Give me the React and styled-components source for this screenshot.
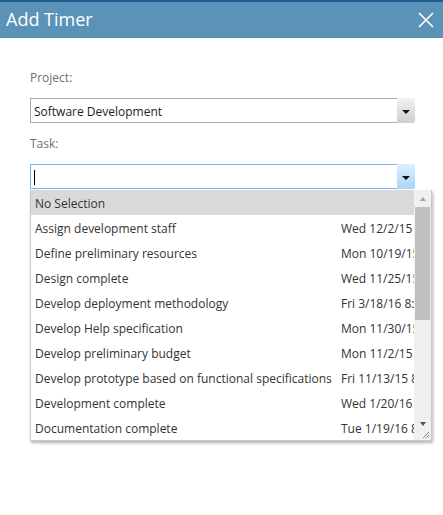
import React from 'react';
import styled, { createGlobalStyle } from 'styled-components';

const GlobalStyle = createGlobalStyle`
  html, body {
    margin: 0;
    padding: 0;
    background: #ffffff;
    font-family: "Open Sans", "Liberation Sans", sans-serif;
  }
`;

const tasks = [
  ['Assign development staff', 'Wed 12/2/15 8:00 AM'],
  ['Define preliminary resources', 'Mon 10/19/15 8:00 AM'],
  ['Design complete', 'Wed 11/25/15 5:00 PM'],
  ['Develop deployment methodology', 'Fri 3/18/16 8:00 AM'],
  ['Develop Help specification', 'Mon 11/30/15 8:00 AM'],
  ['Develop preliminary budget', 'Mon 11/2/15 8:00 AM'],
  ['Develop prototype based on functional specifications', 'Fri 11/13/15 8:00 AM'],
  ['Development complete', 'Wed 1/20/16 5:00 PM'],
  ['Documentation complete', 'Tue 1/19/16 8:00 AM']
];

const Dialog = styled.div`
  width: 443px;
  height: 515px;
  background: #fff;
  position: relative;
  overflow: hidden;
`;

const Header = styled.div`
  height: 36px;
  border-top: 2px solid #1d5b93;
  background: #5a92b8;
  display: flex;
  align-items: center;
  justify-content: space-between;
  padding: 0 8px 0 6px;
`;

const Title = styled.h1`
  margin: 0;
  color: #fff;
  font-size: 18px;
  font-weight: 400;
  line-height: 1;
  padding-bottom: 2px;
`;

const Close = styled.button`
  border: 0;
  background: none;
  padding: 0;
  width: 18px;
  height: 18px;
  display: flex;
  cursor: pointer;
`;

const Body = styled.div`
  padding: 31px 28px 0 30px;
  position: relative;
`;

const Label = styled.div`
  color: #707070;
  font-size: 12px;
  line-height: 17px;
  margin-bottom: ${(p) => p.gap}px;
`;

const Field = styled.div`
  position: relative;
  height: 25px;
  display: flex;
  margin-bottom: ${(p) => p.gap || 0}px;
`;

const Input = styled.div`
  flex: 1;
  box-sizing: border-box;
  height: 25px;
  border: 1px solid ${(p) => (p.focused ? '#7eb4ea' : '#a9a9a9')};
  border-right: 0;
  font-size: 12px;
  color: #222;
  display: flex;
  align-items: center;
  padding: 1px 0 0 3px;
`;

const Caret = styled.span`
  width: 1px;
  height: 15px;
  background: #000;
`;

const Arrow = styled.div`
  width: 18px;
  height: 25px;
  border-radius: 0 2px 2px 0;
  background: ${(p) =>
    p.focused
      ? 'linear-gradient(#dcefff, #a9d6fb)'
      : 'linear-gradient(#f2f2f2, #cfcfcf)'};
  display: flex;
  align-items: center;
  justify-content: center;
  &::after {
    content: '';
    border-left: 4px solid transparent;
    border-right: 4px solid transparent;
    border-top: 4px solid #111;
    margin-top: 2px;
  }
`;

const Popup = styled.div`
  position: absolute;
  top: 26px;
  left: 0;
  width: 402px;
  height: 251px;
  box-sizing: border-box;
  border: 1px solid #c8c8c8;
  border-top: 0;
  background: #fff;
  box-shadow: 1px 2px 3px rgba(0, 0, 0, 0.3);
  display: flex;
  z-index: 2;
`;

const List = styled.div`
  flex: 1;
  overflow: hidden;
`;

const Row = styled.div`
  height: 25px;
  box-sizing: border-box;
  display: flex;
  align-items: center;
  white-space: nowrap;
  font-size: 12px;
  color: #333;
  background: ${(p) => (p.selected ? '#d9d9d9' : '#fff')};
  padding: 1px 0 0 4px;
`;

const Name = styled.span`
  width: 306px;
  flex-shrink: 0;
`;

const DateText = styled.span`
  flex-shrink: 0;
`;

const Scrollbar = styled.div`
  width: 17px;
  background: #f0f0f0;
  display: flex;
  flex-direction: column;
  align-items: center;
  position: relative;
`;

const ScrollArrow = styled.div`
  height: 17px;
  width: 17px;
  display: flex;
  align-items: center;
  justify-content: center;
  &::after {
    content: '';
    border-left: 3.5px solid transparent;
    border-right: 3.5px solid transparent;
    ${(p) => (p.up ? 'border-bottom: 4px solid #a3a3a3;' : 'border-top: 4px solid #505050;')}
  }
`;

const Thumb = styled.div`
  width: 15px;
  height: 113px;
  background: #c1c1c1;
`;

const Track = styled.div`
  flex: 1;
`;

const Grip = styled.svg`
  position: absolute;
  right: 1px;
  bottom: 1px;
`;

export default function App() {
  return (
    <Dialog>
      <GlobalStyle />
      <Header>
        <Title>Add Timer</Title>
        <Close aria-label="Close">
          <svg width="18" height="18" viewBox="0 0 18 18">
            <path d="M2 2 L16 16 M16 2 L2 16" stroke="#fff" strokeWidth="1.6" />
          </svg>
        </Close>
      </Header>
      <Body>
        <Label gap={12}>Project:</Label>
        <Field gap={12}>
          <Input>Software Development</Input>
          <Arrow />
        </Field>
        <Label gap={12}>Task:</Label>
        <Field>
          <Input focused>
            <Caret />
          </Input>
          <Arrow focused />
          <Popup>
            <List>
              <Row selected>No Selection</Row>
              {tasks.map(([name, date]) => (
                <Row key={name}>
                  <Name>{name}</Name>
                  <DateText>{date}</DateText>
                </Row>
              ))}
            </List>
            <Scrollbar>
              <ScrollArrow up />
              <Thumb />
              <Track />
              <ScrollArrow />
              <div style={{ height: 8 }} />
              <Grip width="8" height="8" viewBox="0 0 8 8">
                <path d="M7 1 L1 7 M7 4 L4 7 M7 6.5 L6.5 7" stroke="#888" strokeWidth="1" />
              </Grip>
            </Scrollbar>
          </Popup>
        </Field>
      </Body>
    </Dialog>
  );
}
